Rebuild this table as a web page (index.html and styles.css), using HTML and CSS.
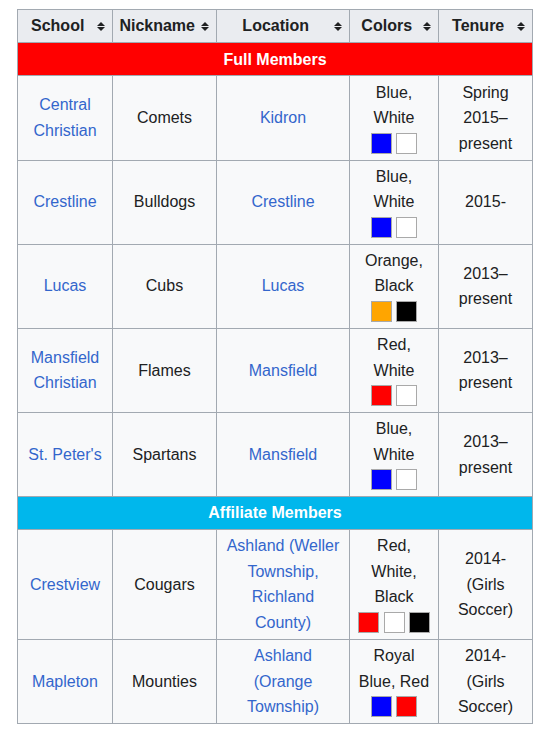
FILE: index.html
```html
<!DOCTYPE html>
<html>
<head>
<meta charset="utf-8">
<link rel="stylesheet" href="styles.css">
</head>
<body>
<table class="wikitable">
<colgroup>
<col class="c1"><col class="c2"><col class="c3"><col class="c4"><col class="c5">
</colgroup>
<thead>
<tr>
<th class="sort">School<svg class="arr" width="8" height="9" viewBox="0 0 8 9"><path d="M4 0 L8 4 L0 4Z M0 5 L8 5 L4 9Z" fill="#202122"/></svg></th>
<th class="sort">Nickname<svg class="arr" width="8" height="9" viewBox="0 0 8 9"><path d="M4 0 L8 4 L0 4Z M0 5 L8 5 L4 9Z" fill="#202122"/></svg></th>
<th class="sort">Location<svg class="arr" width="8" height="9" viewBox="0 0 8 9"><path d="M4 0 L8 4 L0 4Z M0 5 L8 5 L4 9Z" fill="#202122"/></svg></th>
<th class="sort">Colors<svg class="arr" width="8" height="9" viewBox="0 0 8 9"><path d="M4 0 L8 4 L0 4Z M0 5 L8 5 L4 9Z" fill="#202122"/></svg></th>
<th class="sort">Tenure<svg class="arr" width="8" height="9" viewBox="0 0 8 9"><path d="M4 0 L8 4 L0 4Z M0 5 L8 5 L4 9Z" fill="#202122"/></svg></th>
</tr>
</thead>
<tbody>
<tr><th colspan="5" class="group full">Full Members</th></tr>
<tr>
<td><a>Central Christian</a></td>
<td>Comets</td>
<td><a>Kidron</a></td>
<td>Blue, White<br><span class="box blue"></span> <span class="box white"></span></td>
<td>Spring 2015–present</td>
</tr>
<tr>
<td><a>Crestline</a></td>
<td>Bulldogs</td>
<td><a>Crestline</a></td>
<td>Blue, White<br><span class="box blue"></span> <span class="box white"></span></td>
<td>2015-</td>
</tr>
<tr>
<td><a>Lucas</a></td>
<td>Cubs</td>
<td><a>Lucas</a></td>
<td>Orange, Black<br><span class="box orange"></span> <span class="box black"></span></td>
<td>2013–<br>present</td>
</tr>
<tr>
<td><a>Mansfield Christian</a></td>
<td>Flames</td>
<td><a>Mansfield</a></td>
<td>Red, White<br><span class="box red"></span> <span class="box white"></span></td>
<td>2013–<br>present</td>
</tr>
<tr>
<td><a>St. Peter's</a></td>
<td>Spartans</td>
<td><a>Mansfield</a></td>
<td>Blue, White<br><span class="box blue"></span> <span class="box white"></span></td>
<td>2013–<br>present</td>
</tr>
<tr><th colspan="5" class="group aff">Affiliate Members</th></tr>
<tr>
<td><a>Crestview</a></td>
<td>Cougars</td>
<td><a>Ashland (Weller Township, Richland County)</a></td>
<td>Red, White, Black<br><span class="box red"></span> <span class="box white"></span> <span class="box black"></span></td>
<td>2014-<br>(Girls Soccer)</td>
</tr>
<tr>
<td><a>Mapleton</a></td>
<td>Mounties</td>
<td><a>Ashland (Orange Township)</a></td>
<td>Royal Blue, Red<br><span class="box blue"></span> <span class="box red"></span></td>
<td>2014-<br>(Girls Soccer)</td>
</tr>
</tbody>
</table>
</body>
</html>
```
FILE: styles.css
```css
html, body {
  margin: 0;
  background: #fff;
}
body {
  padding: 9px 0 0 17px;
  font-family: "Liberation Sans", Arial, sans-serif;
  font-size: 16px;
  line-height: 1.6;
  color: #202122;
}
.wikitable {
  border-collapse: collapse;
  table-layout: fixed;
  width: 515px;
  background: #f8f9fa;
  border: 1px solid #a2a9b1;
}
.c1 { width: 95px; }
.c2 { width: 104px; }
.c3 { width: 133px; }
.c4 { width: 89px; }
.c5 { width: 94px; }
.wikitable th, .wikitable td {
  border: 1px solid #a2a9b1;
  padding: 3.2px 6.4px;
  text-align: center;
  vertical-align: middle;
}
.wikitable thead th {
  background: #eaecf0;
  font-weight: bold;
  padding-top: 3.4px;
  padding-bottom: 3.4px;
}
.wikitable th.sort {
  position: relative;
  padding-right: 21px;
}
.arr {
  position: absolute;
  right: 7px;
  top: 12px;
}
.group {
  color: #fff;
  font-weight: bold;
}
.full { background: #ff0000; }
.aff { background: #00b7ec; }
a {
  color: #3366cc;
  text-decoration: none;
}
.box {
  display: inline-block;
  width: 19px;
  height: 19px;
  border: 1px solid #a9a9a9;
  vertical-align: -5px;
}
.blue { background: #0000ff; }
.white { background: #ffffff; }
.orange { background: #ffa500; }
.black { background: #000000; }
.red { background: #ff0000; }
```
